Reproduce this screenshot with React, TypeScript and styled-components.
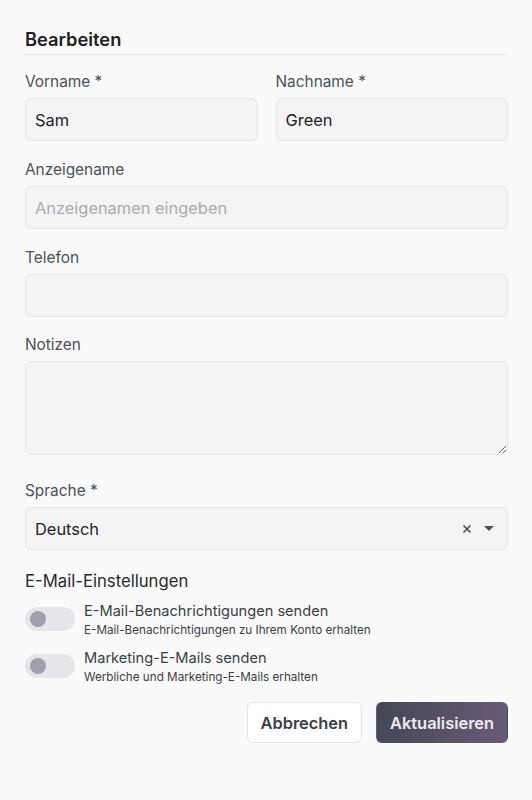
import React from "react";
import styled, { createGlobalStyle } from "styled-components";

const GlobalStyle = createGlobalStyle`
  html, body {
    margin: 0;
    padding: 0;
    background: #fafafa;
    font-family: Inter, "Noto Sans", sans-serif;
    color: #1f2124;
  }
  * { box-sizing: border-box; }
`;

const Page = styled.div`
  padding: 27px 24px 40px 25px;
  min-height: 800px;
  background: #fafafa;
`;

const Title = styled.div`
  font-size: 18.3px;
  line-height: 24px;
  font-weight: 600;
  padding-bottom: 3px;
  border-bottom: 1px solid #e3e3e3;
  margin-bottom: 17px;
`;

const Row = styled.div`
  display: grid;
  grid-template-columns: 1fr 1fr;
  gap: 18px;
`;

const Field = styled.div<{ $gap?: number }>`
  display: flex;
  flex-direction: column;
  margin-bottom: ${(p) => p.$gap ?? 19}px;
`;

const Label = styled.label`
  font-size: 15.4px;
  line-height: 20px;
  color: #4a5156;
  margin-bottom: 6px;
`;

const Input = styled.input`
  height: 43px;
  width: 100%;
  background: #f4f4f4;
  border: 1px solid #e5e5e5;
  border-radius: 6px;
  padding: 0 9px;
  font-family: inherit;
  font-size: 16.4px;
  color: #1f2124;
  outline: none;
  &::placeholder {
    color: #a9abae;
  }
`;

const TextArea = styled.textarea`
  display: block;
  height: 94px;
  width: 100%;
  background: #f4f4f4;
  border: 1px solid #e5e5e5;
  border-radius: 6px;
  padding: 9px;
  font-family: inherit;
  font-size: 16px;
  outline: none;
`;

const Select = styled.div`
  height: 43px;
  display: flex;
  align-items: center;
  background: #f4f4f4;
  border: 1px solid #e5e5e5;
  border-radius: 6px;
  padding: 0 13px 0 9px;
  font-size: 16.4px;
`;

const SelectValue = styled.span`
  flex: 1;
`;

const SelectIcons = styled.div`
  display: flex;
  align-items: center;
  gap: 12px;
  color: #4a4d52;
`;

const SectionTitle = styled.div`
  font-size: 16.7px;
  line-height: 22px;
  color: #26292c;
  margin-bottom: 10px;
`;

const ToggleRow = styled.div`
  display: flex;
  align-items: flex-start;
  gap: 9px;
  margin-bottom: 9px;
`;

const Track = styled.div`
  width: 50px;
  height: 24px;
  border-radius: 12px;
  background: #e6e5ea;
  display: flex;
  align-items: center;
  padding-left: 5px;
  flex-shrink: 0;
  margin-top: 5px;
`;

const Thumb = styled.div`
  width: 16px;
  height: 16px;
  border-radius: 50%;
  background: #a29eaf;
`;

const ToggleText = styled.div`
  display: flex;
  flex-direction: column;
`;

const ToggleTitle = styled.div`
  font-size: 14.6px;
  line-height: 19px;
  color: #3a3e42;
`;

const ToggleSub = styled.div`
  font-size: 11.7px;
  line-height: 19px;
  color: #3a3e42;
`;

const Actions = styled.div`
  display: flex;
  justify-content: flex-end;
  gap: 14px;
  margin-top: 15px;
`;

const Button = styled.button<{ $primary?: boolean }>`
  height: 41px;
  padding: 0 13px;
  border-radius: 6px;
  font-family: inherit;
  font-size: 16.4px;
  font-weight: 600;
  border: 1px solid ${(p) => (p.$primary ? "transparent" : "#e4e4e4")};
  background: ${(p) =>
    p.$primary ? "linear-gradient(100deg, #434853 0%, #6a5a79 100%)" : "#ffffff"};
  color: ${(p) => (p.$primary ? "#ececee" : "#3a4046")};
`;

export default function App() {
  return (
    <Page>
      <GlobalStyle />
      <Title>Bearbeiten</Title>
      <Row>
        <Field>
          <Label>Vorname *</Label>
          <Input defaultValue="Sam" />
        </Field>
        <Field>
          <Label>Nachname *</Label>
          <Input defaultValue="Green" />
        </Field>
      </Row>
      <Field>
        <Label>Anzeigename</Label>
        <Input placeholder="Anzeigenamen eingeben" />
      </Field>
      <Field $gap={18}>
        <Label>Telefon</Label>
        <Input />
      </Field>
      <Field $gap={26}>
        <Label>Notizen</Label>
        <TextArea />
      </Field>
      <Field $gap={20}>
        <Label>Sprache *</Label>
        <Select>
          <SelectValue>Deutsch</SelectValue>
          <SelectIcons>
            <svg width="10" height="10" viewBox="0 0 10 10">
              <path d="M1.5 1.5 L8.5 8.5 M8.5 1.5 L1.5 8.5" stroke="currentColor" strokeWidth="1.6" />
            </svg>
            <svg width="10" height="6" viewBox="0 0 10 6">
              <path d="M0 0 L10 0 L5 5 Z" fill="currentColor" />
            </svg>
          </SelectIcons>
        </Select>
      </Field>
      <SectionTitle>E-Mail-Einstellungen</SectionTitle>
      <ToggleRow>
        <Track>
          <Thumb />
        </Track>
        <ToggleText>
          <ToggleTitle>E-Mail-Benachrichtigungen senden</ToggleTitle>
          <ToggleSub>E-Mail-Benachrichtigungen zu Ihrem Konto erhalten</ToggleSub>
        </ToggleText>
      </ToggleRow>
      <ToggleRow>
        <Track>
          <Thumb />
        </Track>
        <ToggleText>
          <ToggleTitle>Marketing-E-Mails senden</ToggleTitle>
          <ToggleSub>Werbliche und Marketing-E-Mails erhalten</ToggleSub>
        </ToggleText>
      </ToggleRow>
      <Actions>
        <Button>Abbrechen</Button>
        <Button $primary>Aktualisieren</Button>
      </Actions>
    </Page>
  );
}
